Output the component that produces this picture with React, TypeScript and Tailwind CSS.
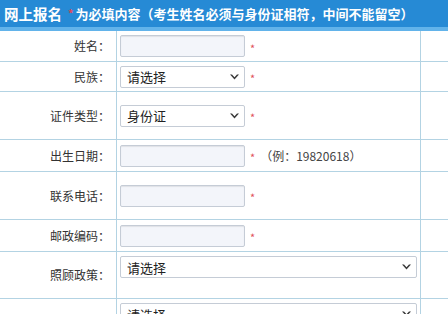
import { ReactNode } from 'react'

const font = { fontFamily: '"Noto Sans CJK SC", "Noto Sans", sans-serif' }

function Star() {
  return <span className="ml-[5px] text-[11px] leading-none text-[#e0505a] translate-y-[2px]">*</span>
}

function TextInput() {
  return (
    <div className="h-[22px] w-[125px] rounded-[2px] border border-[#c5ccd6] bg-[#f3f5fa] shadow-[inset_0_1px_1px_rgba(0,0,0,0.08)]" />
  )
}

function Select({ text, wide }: { text: string; wide?: boolean }) {
  return (
    <div
      className={`flex h-[22px] items-center justify-between rounded-[2px] border border-[#c5ccd6] bg-white pl-[6px] pr-[5px] ${
        wide ? 'w-[297px] bg-[#fbfcfe]' : 'w-[125px]'
      }`}
    >
      <span className="text-[13px] leading-none text-[#222]">{text}</span>
      <svg width="9" height="6" viewBox="0 0 9 6">
        <path d="M0 0.5 L4.5 5.5 L9 0.5 L7 0.5 L4.5 3.2 L2 0.5 Z" fill="#3a3a3a" />
      </svg>
    </div>
  )
}

function Row({
  label,
  h,
  children,
  top
}: {
  label: string
  h: string
  children: ReactNode
  top?: boolean
}) {
  return (
    <div className={`flex border-b border-[#b3d3e3] ${h}`}>
      <div className="flex w-[117px] items-center justify-end border-r border-[#b3d3e3] pr-[6px] text-[12px] text-[#333]">
        {label}
      </div>
      <div
        className={`flex w-[304px] border-r border-[#b3d3e3] pl-[3px] ${
          top ? 'items-start pt-[4px]' : 'items-center'
        }`}
      >
        {children}
      </div>
      <div className="flex-1" />
    </div>
  )
}

export default function App() {
  return (
    <div className="h-[314px] w-[448px] overflow-hidden bg-white" style={font}>
      <div className="flex h-[27px] items-center bg-[#268ad5] pl-[4px] font-bold text-white">
        <span className="text-[14.5px]">网上报名</span>
        <span className="ml-[6px] mr-[2px] text-[11px] text-[#e04a5a]">*</span>
        <span className="text-[13px]">为必填内容（考生姓名必须与身份证相符，中间不能留空）</span>
      </div>
      <div className="h-[4px] bg-[#62b3ea]" />
      <Row label="姓名：" h="h-[31px]">
        <TextInput />
        <Star />
      </Row>
      <Row label="民族：" h="h-[30px]">
        <Select text="请选择" />
        <Star />
      </Row>
      <Row label="证件类型：" h="h-[48px]">
        <Select text="身份证" />
        <Star />
      </Row>
      <Row label="出生日期：" h="h-[32px]">
        <TextInput />
        <Star />
        <span className="ml-[5px] text-[12px] text-[#444]">（例：19820618）</span>
      </Row>
      <Row label="联系电话：" h="h-[48px]">
        <TextInput />
        <Star />
      </Row>
      <Row label="邮政编码：" h="h-[32px]">
        <TextInput />
        <Star />
      </Row>
      <Row label="照顾政策：" h="h-[47px]" top>
        <Select text="请选择" wide />
      </Row>
      <Row label="考生特征：" h="h-[47px]" top>
        <Select text="请选择" wide />
      </Row>
    </div>
  )
}
